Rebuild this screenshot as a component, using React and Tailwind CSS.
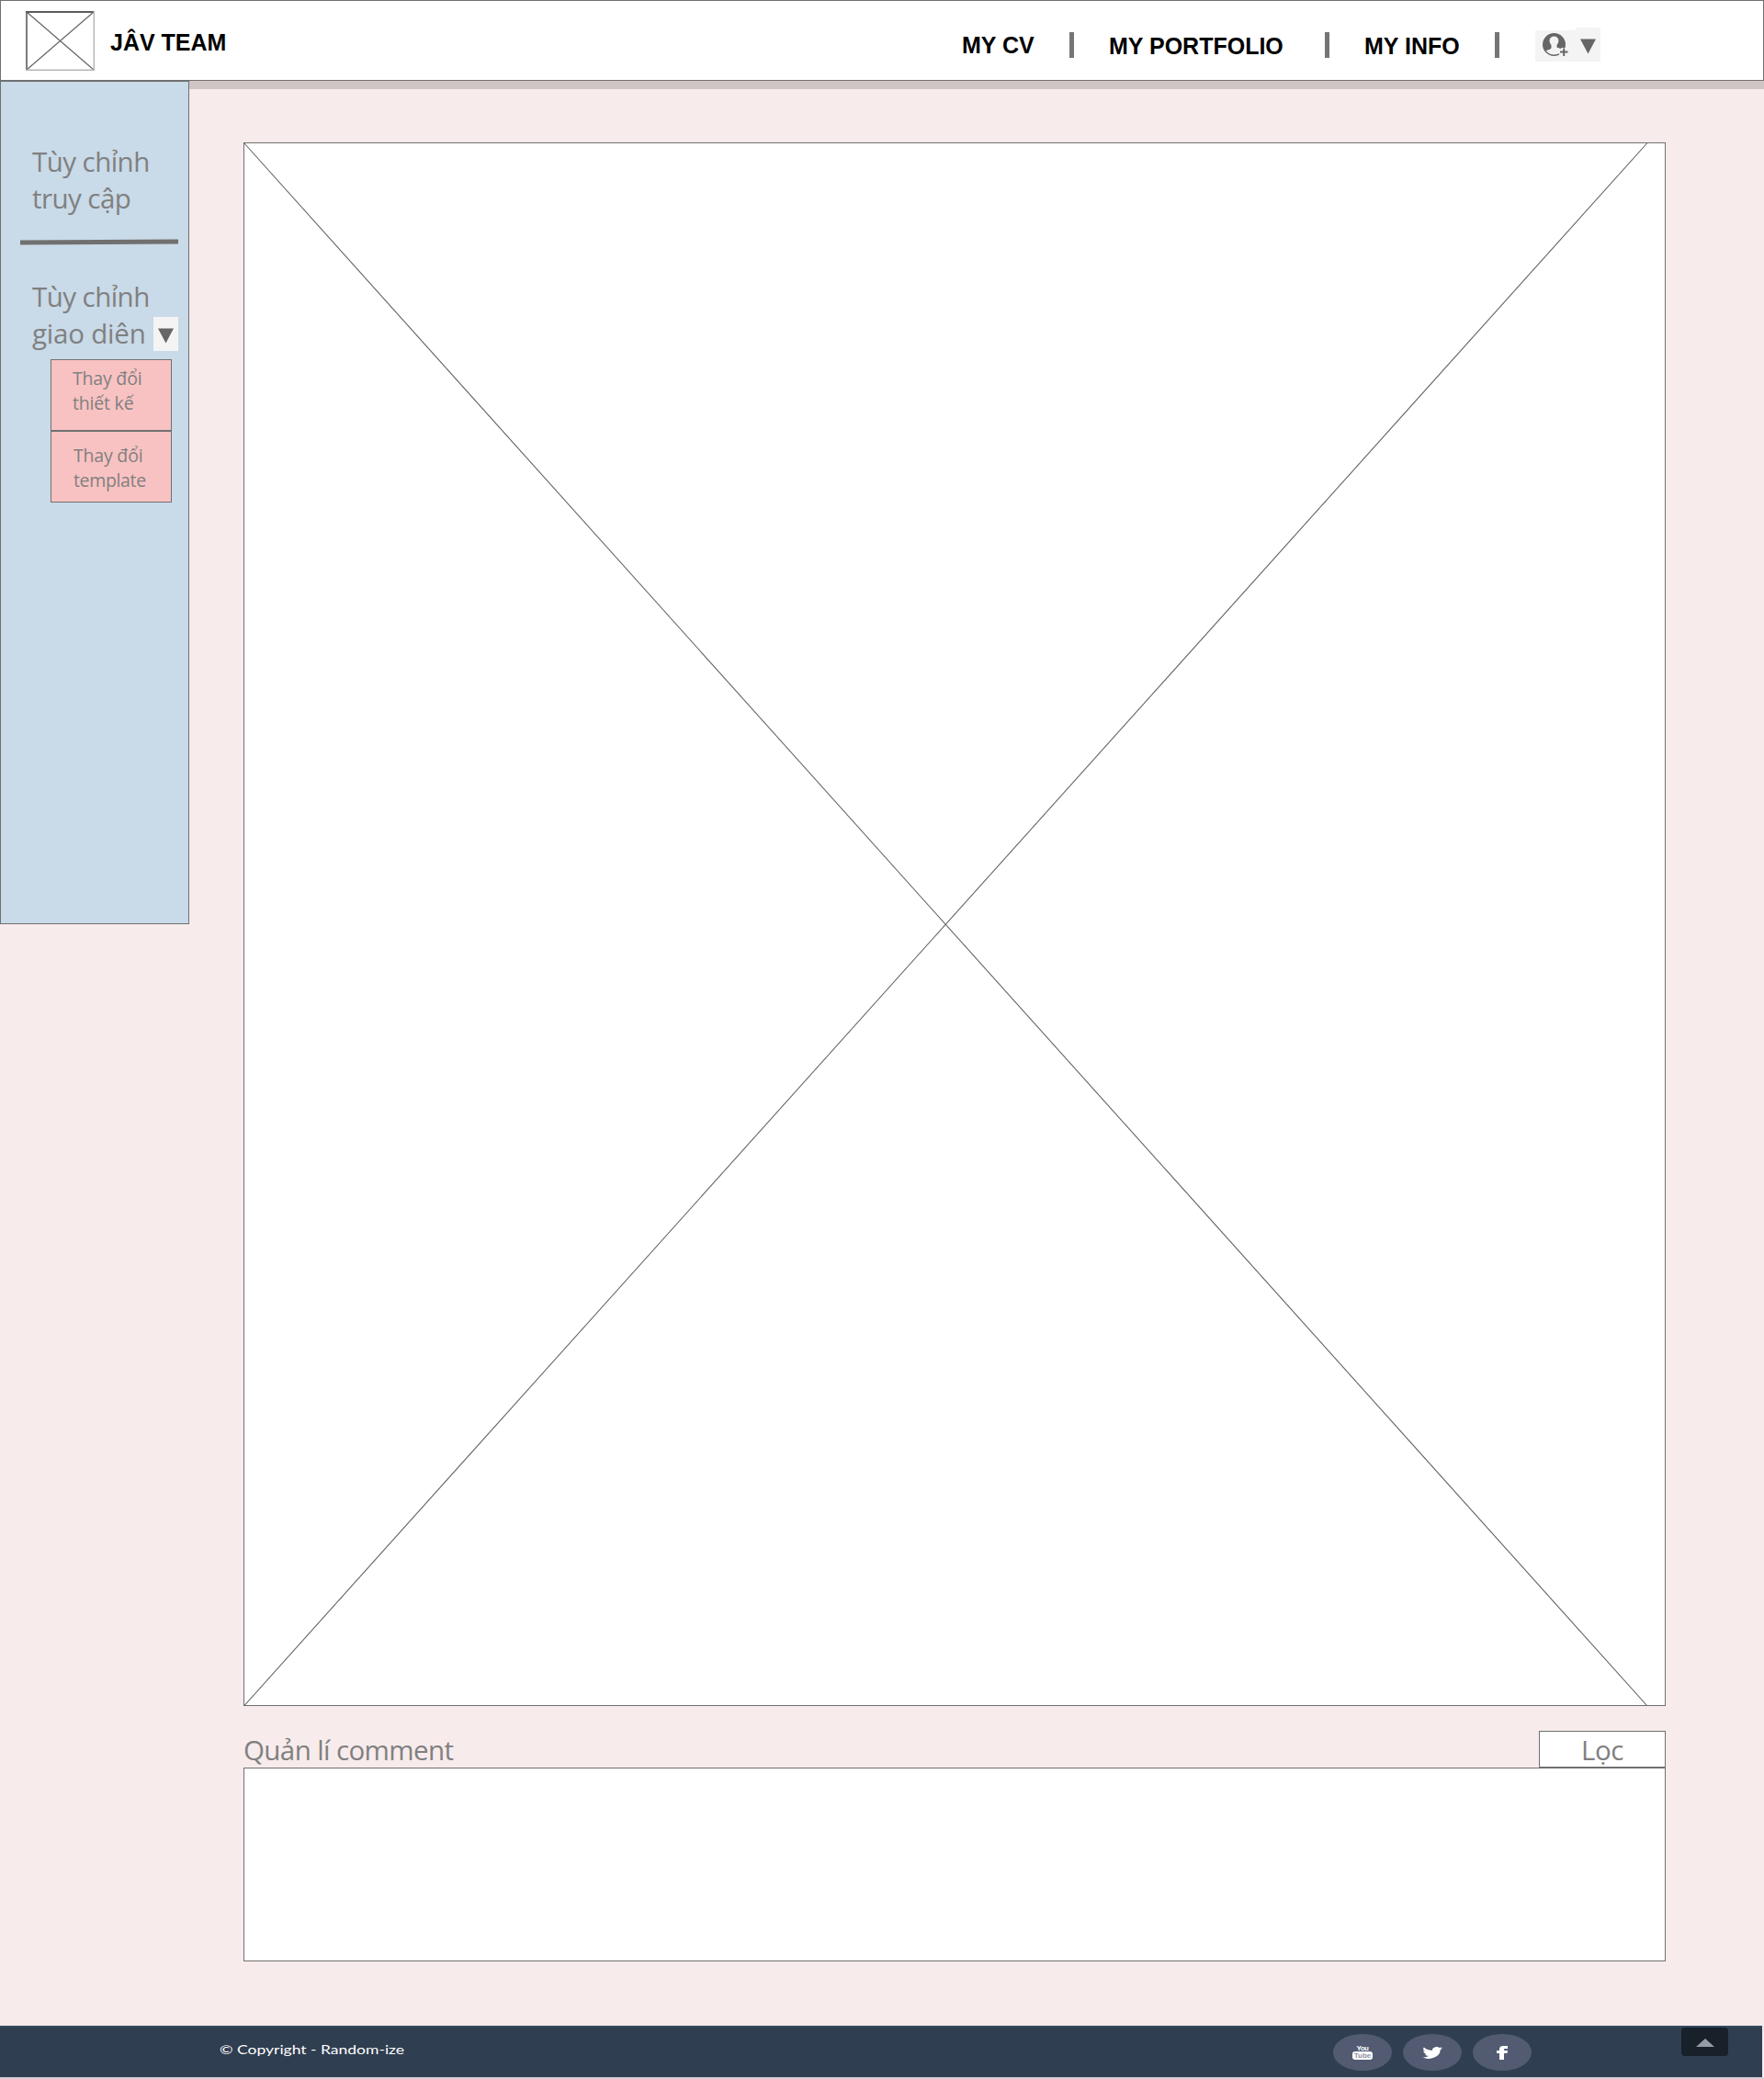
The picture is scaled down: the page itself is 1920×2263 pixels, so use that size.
const Sep = ({ className }) => <span className={`h-7 w-[5px] shrink-0 bg-[#757575] ${className}`} />;

const Caret = () => (
  <svg width="17" height="17" viewBox="0 0 17 17"><path d="M0 0.5H17L8.5 16.5Z" fill="#666" /></svg>
);

const NavText = ({ children, className }) => (
  <span className={`shrink-0 whitespace-nowrap font-['Liberation_Sans'] text-[25px] leading-7 font-bold text-black ${className}`}>{children}</span>
);

function Header() {
  return (
    <header className="relative z-10 flex h-[88px] items-start border border-[#707070] bg-white">
      <svg className="mt-[11px] ml-[27px] shrink-0" width="75" height="65" viewBox="0 0 75 65" fill="none">
        <path d="M1 1L74 64M74 1L1 64" stroke="#666" strokeWidth="1.2" />
        <path d="M0 1H75" stroke="#5c5c5c" strokeWidth="2" />
        <path d="M1 0V65" stroke="#5c5c5c" strokeWidth="1.6" />
        <path d="M74.3 0V65M0 64.3H75" stroke="#b5b5b5" strokeWidth="1.4" />
      </svg>
      <NavText className="mt-[31px] ml-[17px] w-[927px]">JÂV TEAM</NavText>
      <NavText className="mt-[34px] w-[117px]">MY CV</NavText>
      <Sep className="mt-[34px] mr-[38px]" />
      <NavText className="mt-[35px] w-[192px]">MY PORTFOLIO</NavText>
      <Sep className="mt-[34px] ml-[43px] mr-[38px]" />
      <NavText className="mt-[35px] w-[142px]">MY INFO</NavText>
      <Sep className="mt-[34px] mr-[39px]" />
      <div className="mt-[29px] flex items-end">
        <div className="flex h-[34px] w-11 items-start bg-[#f4f4f4] pt-[3px] pl-2">
          <svg width="28" height="26" viewBox="0 0 28 26" fill="none">
            <circle cx="12.5" cy="12.5" r="11.7" stroke="#666" strokeWidth="1.6" />
            <path d="M4 21C1 17 0 12 2 7C5 2 9 1 12.5 1S20 2 23 7C25 11 24 15 22.500 18L15.500 15.500V13C19 9 17.500 3.500 12.500 3.500S6 9 9.500 13V16C9 18 6 18 4 19Z" fill="#666" />
            <path d="M18 20.5H28M23.2 16V26" stroke="#f4f4f4" strokeWidth="6" />
            <path d="M19 20.5H27.5M23.2 16.5V25" stroke="#666" strokeWidth="2" />
          </svg>
        </div>
        <div className="flex h-[37px] w-[27px] items-start justify-center bg-[#f4f4f4] pt-3"><Caret /></div>
      </div>
    </header>
  );
}

function Sidebar() {
  return (
    <aside className="h-[918px] w-[206px] shrink-0 border border-[#707070] bg-[#c9dae8] text-[#808080]">
      <p className="mt-[67px] ml-[34px] text-[29.5px] leading-10 tracking-[-0.55px] whitespace-nowrap">
        <span className="block">Tùy chỉnh</span>
        <span className="block">truy cập</span>
      </p>
      <svg className="mt-[24px] ml-[21px] block" width="172" height="7"><path d="M0 4L172 3" stroke="#707070" strokeWidth="5" /></svg>
      <div className="mt-[36px] ml-[34px] text-[29.5px] leading-10 whitespace-nowrap">
        <p className="tracking-[-0.55px]">Tùy chỉnh</p>
        <div className="flex h-10">
          <p className="w-[132px] tracking-[-0.2px]">giao diên</p>
          <div className="mt-[2px] flex h-[37px] w-[27px] items-start justify-center bg-[#f4f4f4] pt-3"><Caret /></div>
        </div>
      </div>
      <div className="mt-[8px] ml-[54px] w-[132px] text-[19.5px] leading-[27px] tracking-[-0.2px] whitespace-nowrap">
        <div className="h-[78px] border border-[#707070] bg-[#f9c2c2] pt-[6px] pl-[23px]">
          <span className="block">Thay đổi</span>
          <span className="block">thiết kế</span>
        </div>
        <div className="h-[78px] border border-[#707070] bg-[#f9c2c2] pt-[12px] pl-6">
          <span className="block">Thay đổi</span>
          <span className="block tracking-[-0.35px]">template</span>
        </div>
      </div>
    </aside>
  );
}

const Social = ({ children }) => (
  <span className="flex h-10 w-16 items-center justify-center rounded-[50%] bg-[#525b72]">{children}</span>
);

function Footer() {
  return (
    <footer className="flex h-14 w-[1918px] items-start border-t-2 border-[#304a5d] bg-[#2f3e50]">
      <p className="mt-[11px] ml-[239px] w-[1212px] whitespace-nowrap text-white">
        <span className="inline-block origin-left scale-x-[1.345] font-[Lato] text-[13px] leading-6">© Copyright - Random-ize</span>
      </p>
      <div className="mt-[7px] flex gap-3">
        <Social>
          <span className="flex flex-col items-center font-['Liberation_Sans_Narrow','Liberation_Sans'] font-bold">
            <span className="h-[7px] text-[8px] leading-[7px] tracking-[-0.5px] text-white">You</span>
            <span className="h-[9px] w-[22px] rounded-[3px] bg-white text-center text-[8px] leading-[9px] text-[#8b91a2]">Tube</span>
          </span>
        </Social>
        <Social>
          <svg width="22" height="13" viewBox="1 3 22 18" preserveAspectRatio="none" fill="#fff"><path d="M23 5a9 9 0 0 1-2.400.7 4.300 4.300 0 0 0 1.900-2.400 9 9 0 0 1-2.800 1.100 4.500 4.500 0 0 0-7.600 4.100A12.700 12.700 0 0 1 2.900 3.800a4.500 4.500 0 0 0 1.400 6 4.400 4.400 0 0 1-2-.6 4.500 4.500 0 0 0 3.600 4.400 4.500 4.500 0 0 1-2 .1 4.500 4.500 0 0 0 4.200 3.100A9 9 0 0 1 1 18.700a12.700 12.700 0 0 0 19.600-11.300A9 9 0 0 0 23 5Z" /></svg>
        </Social>
        <Social>
          <svg width="12" height="15" viewBox="0 0 12 15" fill="#fff"><path d="M3 15V8H0V5H3V3.500Q3 0 7 0H12V3H9Q8 3 8 4V5H12L11.500 8H8V15Z" /></svg>
        </Social>
      </div>
      <div className="ml-[163px] flex h-[31px] w-[51px] items-center justify-center rounded-sm bg-[#18202a] pt-[2px]">
        <svg width="20" height="9"><path d="M0 9L10 0L20 9Z" fill="#969ca4" /></svg>
      </div>
    </footer>
  );
}

export default function App() {
  return (
    <div className="h-[2263px] w-[1920px] overflow-hidden bg-[#f7ebeb] font-['Open_Sans','Noto_Sans',sans-serif]">
      <Header />
      <div className="flex h-[2117px] items-start">
        <Sidebar />
        <div className="flex-1">
          <div className="h-[9px] bg-[#d0c5c5]" />
          <main className="mt-[58px] ml-[59px] w-[1548px] text-[#808080]">
            <div className="h-[1702px] border border-[#707070] bg-white">
              <svg className="-mt-px -ml-px block" width="1548" height="1702" fill="none"><path d="M0.500 0.500L1528 1702M1528 0.500L0.500 1702" stroke="#666" strokeWidth="1.1" /></svg>
            </div>
            <div className="mt-[27px] flex h-10 items-start justify-between text-[29.5px] leading-10">
              <h2 className="mt-px tracking-[-0.6px] whitespace-nowrap">Quản lí comment</h2>
              <button className="h-10 w-[138px] border border-[#707070] bg-white tracking-[-0.4px]"><span className="block">Lọc</span></button>
            </div>
            <div className="h-[211px] border border-[#707070] bg-white" />
          </main>
        </div>
      </div>
      <Footer />
      <div className="h-[2px] bg-[#d5d0dc]" />
    </div>
  );
}
